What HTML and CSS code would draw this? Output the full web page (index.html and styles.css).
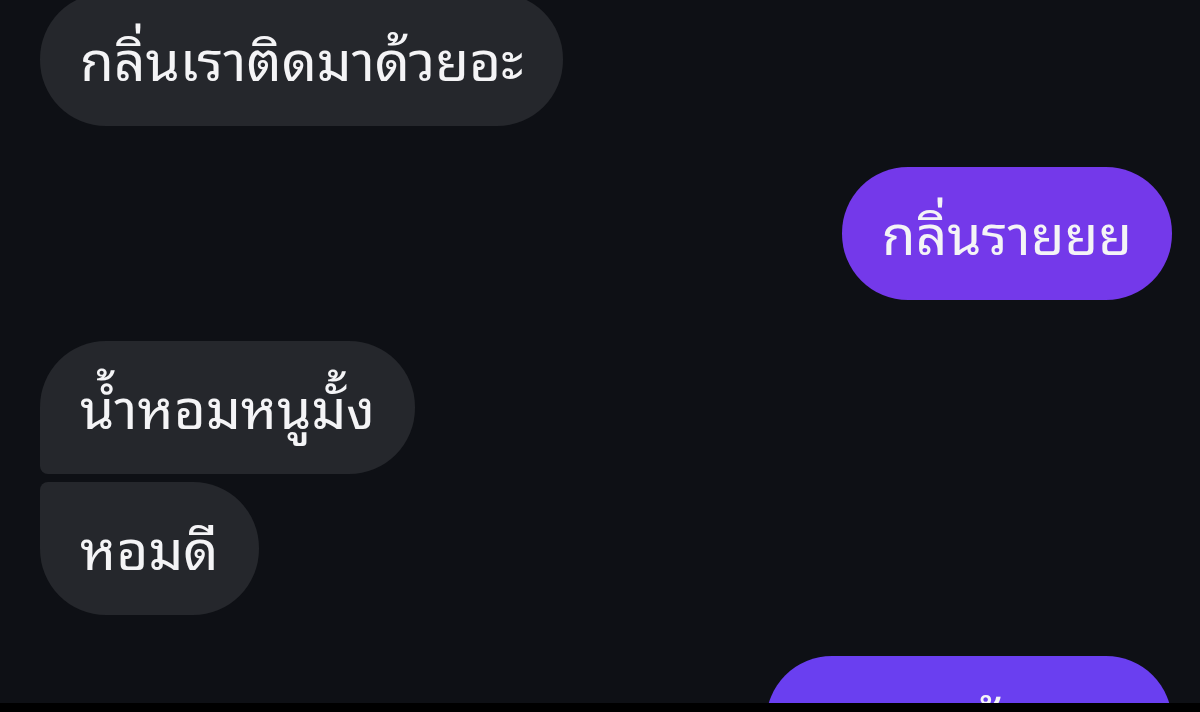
FILE: index.html
```html
<!DOCTYPE html>
<html lang="th">
<head>
<meta charset="utf-8">
<title>Chat</title>
<link rel="stylesheet" href="styles.css">
</head>
<body>
<div class="screen">
  <div class="thread">
    <div class="row in"><div class="bubble">กลิ่นเราติดมาด้วยอะ</div></div>
    <div class="row out"><div class="bubble purple-a">กลิ่นรายยย</div></div>
    <div class="group">
      <div class="row in"><div class="bubble first">น้ำหอมหนูมั้ง</div></div>
      <div class="row in"><div class="bubble last">หอมดี</div></div>
    </div>
    <div class="row out"><div class="bubble purple-b">ของหนูค้าบบบ</div></div>
  </div>
</div>
<div class="strip"></div>
</body>
</html>
```

FILE: styles.css
```css
html, body {
  margin: 0;
  padding: 0;
  background: #000;
}
body {
  width: 1200px;
  height: 712px;
  overflow: hidden;
  font-family: "Noto Sans Thai Looped", "Noto Sans Thai", sans-serif;
}
.screen {
  height: 703px;
  overflow: hidden;
  background: #0e1015;
}
.thread {
  display: flex;
  flex-direction: column;
  gap: 41px;
  padding: 0 28px 0 40px;
  margin-top: -7px;
}
.group {
  display: flex;
  flex-direction: column;
  gap: 8px;
}
.row {
  display: flex;
}
.row.in { justify-content: flex-start; }
.row.out { justify-content: flex-end; }
.bubble {
  height: 133px;
  box-sizing: border-box;
  padding: 0 40px 7px;
  border-radius: 66px;
  display: flex;
  align-items: center;
  font-size: 55px;
  line-height: 1;
  color: #f4f4f6;
  background: #25272c;
  white-space: nowrap;
}
.bubble.first { border-bottom-left-radius: 8px; }
.bubble.last { border-top-left-radius: 8px; }
.purple-a { background: #7439ea; }
.purple-b { background: #6a3ff0; }
.strip {
  height: 9px;
  background: #000;
}
```
